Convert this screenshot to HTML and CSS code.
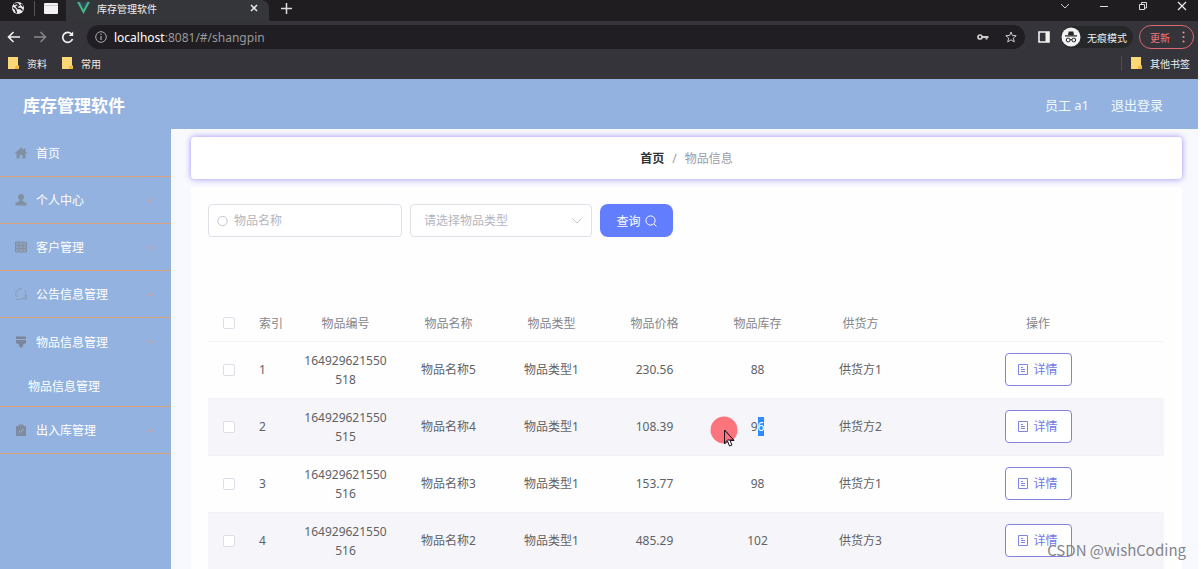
FILE: index.html
```html
<!DOCTYPE html>
<html lang="zh-CN">
<head>
<meta charset="utf-8">
<title>库存管理软件</title>
<link rel="stylesheet" href="styles.css">
</head>
<body>
<div class="screen">
  <div class="browser">
    <div class="tabstrip">
      <div class="pinned">
        <svg class="globe" width="14" height="14" viewBox="0 0 14 14"><circle cx="7" cy="7" r="6" fill="#eee"/><path d="M3 3.500 6.500 2.500 8 4.500 5.500 5.500 7 7.500H9.500L11.500 9.500M2 6.500 4.500 8.500 5.500 12M10 3 12 5.500" fill="none" stroke="#222" stroke-width="1.500"/></svg>
        <span class="pin-line"></span>
        <svg width="14" height="11" viewBox="0 0 14 11"><rect width="14" height="11" rx="1" fill="#f2f2f2"/><path d="M0 2.500H14" stroke="#ccc"/></svg>
      </div>
      <div class="tab">
        <svg width="13" height="12" viewBox="0 0 13 12"><path d="M0 0H2.700L6.500 7.500 10.300 0H13L6.500 12Z" fill="#41b883"/><path d="M2.700 0H4.900L6.500 3.200 8.100 0H10.300L6.500 7.500Z" fill="#35495e"/></svg>
        <span class="tab-title">库存管理软件</span>
        <button class="bare" aria-label="关闭标签页"><svg width="8" height="8" viewBox="0 0 8 8"><path d="M1 1 7 7M7 1 1 7" stroke="#eee" stroke-width="1.500"/></svg></button>
      </div>
      <button class="bare new-tab" aria-label="新建标签页"><svg width="11" height="11" viewBox="0 0 11 11"><path d="M5.500 0V11M0 5.500H11" stroke="#ddd" stroke-width="1.500"/></svg></button>
      <div class="window-buttons">
        <button class="bare" aria-label="搜索标签页"><svg width="10" height="10" viewBox="0 0 10 10"><path d="M1 3 5 7 9 3" fill="none" stroke="#ccc"/></svg></button>
        <button class="bare" aria-label="最小化"><svg width="10" height="10" viewBox="0 0 10 10"><path d="M1 5.500H9" stroke="#ddd"/></svg></button>
        <button class="bare" aria-label="还原"><svg width="10" height="10" viewBox="0 0 10 10"><path d="M1.500 3.500H6.500V8.500H1.500ZM3.500 3V1.500H8.500V7H7" fill="none" stroke="#ddd"/></svg></button>
        <button class="bare" aria-label="关闭"><svg width="10" height="10" viewBox="0 0 10 10"><path d="M1 1 9 9M9 1 1 9" stroke="#eee" stroke-width="1.200"/></svg></button>
      </div>
    </div>
    <div class="toolbar">
      <div class="nav-buttons">
        <button class="bare" aria-label="后退"><svg width="13" height="12" viewBox="0 0 13 12"><path d="M13 6H1.500M6.500 1 1.500 6 6.500 11" fill="none" stroke="#f2f2f2" stroke-width="1.600"/></svg></button>
        <button class="bare" aria-label="前进"><svg width="13" height="12" viewBox="0 0 13 12"><path d="M0 6H11.500M6.500 1 11.500 6 6.500 11" fill="none" stroke="#8a8a8a" stroke-width="1.400"/></svg></button>
        <button class="bare" aria-label="重新加载"><svg width="13" height="13" viewBox="0 0 13 13"><path d="M11.500 8A5 5 0 1 1 10.500 3" fill="none" stroke="#f2f2f2" stroke-width="1.700"/><path d="M12.200.5V5H7.700Z" fill="#f2f2f2"/></svg></button>
      </div>
      <div class="address">
        <svg width="12" height="12" viewBox="0 0 12 12"><circle cx="6" cy="6" r="5.300" fill="none" stroke="#aaa"/><path d="M6 5V9M6 2.800V4" stroke="#aaa" stroke-width="1.200"/></svg>
        <span class="url"><b>localhost</b>:8081/#/shangpin</span>
        <svg width="12" height="8" viewBox="0 0 12 8"><circle cx="3" cy="4" r="2" fill="none" stroke="#ccc" stroke-width="1.700"/><path d="M5 4H11.500M9.500 4V6.500" stroke="#ccc" stroke-width="1.800"/></svg>
        <svg width="12" height="12" viewBox="0 0 12 12"><path d="M6 1 7.400 4.500 11.200 4.700 8.300 7.100 9.300 10.900 6 8.800 2.700 10.900 3.700 7.100.8 4.700 4.600 4.500Z" fill="none" stroke="#ccc"/></svg>
      </div>
      <svg class="side-panel" width="12" height="12" viewBox="0 0 12 12"><path d="M1 1H11V11H1Z" fill="none" stroke="#f2f2f2" stroke-width="1.600"/><path d="M7.500 1H11V11H7.500Z" fill="#f2f2f2"/></svg>
      <div class="incognito">
        <svg width="20" height="20" viewBox="0 0 20 20"><circle cx="10" cy="10" r="9.500" fill="#f2f2f2"/><path d="M7 8 7.700 4.500H12.300L13 8ZM4 8.300H16V9.500H4Z" fill="#252525"/><circle cx="7.200" cy="13" r="1.900" fill="none" stroke="#252525"/><circle cx="12.800" cy="13" r="1.900" fill="none" stroke="#252525"/><path d="M9 12.700H11" stroke="#252525"/></svg>
        <span>无痕模式</span>
      </div>
      <button class="update">更新<svg width="3" height="12" viewBox="0 0 3 12"><circle cx="1.500" cy="1.500" r="1.100" fill="#f28b82"/><circle cx="1.500" cy="6" r="1.100" fill="#f28b82"/><circle cx="1.500" cy="10.500" r="1.100" fill="#f28b82"/></svg></button>
    </div>
    <div class="bookmarks">
      <a class="bookmark" href="#"><svg width="11" height="12" viewBox="0 0 11 12"><path d="M0 0H10V8L11 9V12H0Z" fill="#fbd775"/><path d="M7 12V10L8.500 8.500 11 10V12Z" fill="#efb73e"/></svg>资料</a>
      <a class="bookmark" href="#"><svg width="11" height="12" viewBox="0 0 11 12"><path d="M0 0H10V8L11 9V12H0Z" fill="#fbd775"/><path d="M7 12V10L8.500 8.500 11 10V12Z" fill="#efb73e"/></svg>常用</a>
      <a class="bookmark other" href="#"><svg width="11" height="12" viewBox="0 0 11 12"><path d="M0 0H10V8L11 9V12H0Z" fill="#fbd775"/><path d="M7 12V10L8.500 8.500 11 10V12Z" fill="#efb73e"/></svg>其他书签</a>
    </div>
  </div>

  <header class="header">
    <h1 class="brand">库存管理软件</h1>
    <span>员工 a1</span>
    <a class="logout" href="#">退出登录</a>
  </header>

  <div class="body">
    <nav class="sidebar">
      <a class="menu-item" href="#"><svg width="14" height="14" viewBox="0 0 14 14"><path d="M7 1.500 0.500 7.500H2.500V12.500H5.700V9H8.300V12.500H11.500V7.500H13.500L11.500 5.500V2.500H9.800V4Z" fill="#8190a2"/></svg><span>首页</span></a>
      <a class="menu-item" href="#"><svg width="14" height="14" viewBox="0 0 14 14"><circle cx="7" cy="4" r="3" fill="#8190a2"/><path d="M5.500 6H8.500V8L12.500 10V12.500H1.500V10L5.500 8Z" fill="#8190a2"/></svg><span>个人中心</span><svg class="arrow" width="8" height="5" viewBox="0 0 8 5"><path d="M1 1 4 4 7 1"/></svg></a>
      <a class="menu-item" href="#"><svg width="14" height="14" viewBox="0 0 14 14"><path d="M1.500 2H12.500V12H1.500ZM1.500 5.500H12.500M1.500 8.500H12.500M5 2V12M9 2V12" fill="#8fa1be" stroke="#8190a2"/></svg><span>客户管理</span><svg class="arrow" width="8" height="5" viewBox="0 0 8 5"><path d="M1 1 4 4 7 1"/></svg></a>
      <a class="menu-item" href="#"><svg width="14" height="14" viewBox="0 0 14 14"><path d="M2.500 10A5.500 5.500 0 0 1 8 1.700M11 3.500A5.500 5.500 0 0 1 5 12M2 12.500H5M9.500 12H12.500V8" fill="none" stroke="#879cb4"/></svg><span>公告信息管理</span><svg class="arrow" width="8" height="5" viewBox="0 0 8 5"><path d="M1 1 4 4 7 1"/></svg></a>
      <div class="menu-group">
        <a class="menu-item" href="#"><svg width="14" height="14" viewBox="0 0 14 14"><path d="M2 1.500H12V4H2ZM2 5H12V8L9 9.500V11L7 13 5 11V9.500L2 8Z" fill="#7d859b"/></svg><span>物品信息管理</span><svg class="arrow" width="8" height="5" viewBox="0 0 8 5"><path d="M1 4 4 1 7 4"/></svg></a>
        <a class="sub-item" href="#">物品信息管理</a>
      </div>
      <a class="menu-item" href="#"><svg width="14" height="14" viewBox="0 0 14 14"><path d="M2 3H4.500V1.500H9.500V3H12V13H2Z" fill="#7f8ba0"/><path d="M5 8 6.500 9.500 9.500 6" fill="none" stroke="#a2b5cf"/></svg><span>出入库管理</span><svg class="arrow" width="8" height="5" viewBox="0 0 8 5"><path d="M1 1 4 4 7 1"/></svg></a>
    </nav>

    <main class="main">
      <div class="breadcrumb"><a class="home" href="#">首页</a><span>/</span><span>物品信息</span></div>
      <section class="panel">
        <form class="filters">
          <label class="field"><svg width="12" height="12" viewBox="0 0 12 12"><circle cx="5.500" cy="6" r="4.700" fill="none" stroke="#c4c6cf"/></svg><input class="control" type="text" placeholder="物品名称" aria-label="物品名称"></label>
          <label class="field type"><select class="control" aria-label="物品类型"><option>请选择物品类型</option></select><svg width="10" height="6" viewBox="0 0 10 6"><path d="M.5.5 5 5 9.500.5" fill="none" stroke="#c4c6cf"/></svg></label>
          <button class="search" type="button">查询<svg width="12" height="12" viewBox="0 0 12 12"><circle cx="5.500" cy="5.500" r="4.600" fill="none" stroke="#fff"/><path d="M9 9 11.500 11.500" stroke="#fff"/></svg></button>
        </form>
        <table class="goods">
          <colgroup><col class="c-check"><col class="c-index"><col class="c-data"><col class="c-data"><col class="c-data"><col class="c-data"><col class="c-data"><col class="c-data"><col></colgroup>
          <thead><tr><th><input type="checkbox" class="check" aria-label="全选"></th><th class="index">索引</th><th>物品编号</th><th>物品名称</th><th>物品类型</th><th>物品价格</th><th>物品库存</th><th>供货方</th><th>操作</th></tr></thead>
          <tbody>
            <tr><td><input type="checkbox" class="check" aria-label="选择第1行"></td><td class="index">1</td><td class="code">164929621550518</td><td>物品名称5</td><td>物品类型1</td><td>230.56</td><td>88</td><td>供货方1</td><td><button class="detail"><svg width="10" height="11" viewBox="0 0 10 11"><path d="M.5.5H9.500V10.500H.5ZM3 3.500H5M3 5.500H7M3 7.500H7" fill="none" stroke="#7f84e8"/></svg>详情</button></td></tr>
            <tr><td><input type="checkbox" class="check" aria-label="选择第2行"></td><td class="index">2</td><td class="code">164929621550515</td><td>物品名称4</td><td>物品类型1</td><td>108.39</td><td class="stock">9<span class="selected">6</span><svg class="pointer" width="28" height="32" viewBox="0 0 28 32"><circle cx="14" cy="14" r="13.500" fill="#fc747c"/><path d="M14.500 14V28L17.500 25 19.500 30 22 29 20 24.500H24Z" fill="#fff" stroke="#1d1320"/><path d="M14.500 14V27L17.500 24H23.500Z" fill="#fc747c" stroke="#1d1320"/></svg></td><td>供货方2</td><td><button class="detail"><svg width="10" height="11" viewBox="0 0 10 11"><path d="M.5.5H9.500V10.500H.5ZM3 3.500H5M3 5.500H7M3 7.500H7" fill="none" stroke="#7f84e8"/></svg>详情</button></td></tr>
            <tr><td><input type="checkbox" class="check" aria-label="选择第3行"></td><td class="index">3</td><td class="code">164929621550516</td><td>物品名称3</td><td>物品类型1</td><td>153.77</td><td>98</td><td>供货方1</td><td><button class="detail"><svg width="10" height="11" viewBox="0 0 10 11"><path d="M.5.5H9.500V10.500H.5ZM3 3.500H5M3 5.500H7M3 7.500H7" fill="none" stroke="#7f84e8"/></svg>详情</button></td></tr>
            <tr><td><input type="checkbox" class="check" aria-label="选择第4行"></td><td class="index">4</td><td class="code">164929621550516</td><td>物品名称2</td><td>物品类型1</td><td>485.29</td><td>102</td><td>供货方3</td><td><button class="detail"><svg width="10" height="11" viewBox="0 0 10 11"><path d="M.5.5H9.500V10.500H.5ZM3 3.500H5M3 5.500H7M3 7.500H7" fill="none" stroke="#7f84e8"/></svg>详情</button></td></tr>
          </tbody>
        </table>
      </section>
    </main>
  </div>
  <div class="watermark">CSDN @wishCoding</div>
</div>
</body>
</html>
```

FILE: styles.css
```css
* { box-sizing: border-box; }
body {
  margin: 0;
  padding-right: 3px;
  background: #fff;
  font-family: "Noto Sans", "Noto Sans CJK SC", sans-serif;
  font-size: 12px;
  color: #606266;
}
a { color: inherit; text-decoration: none; }
svg { display: block; flex: none; }
button, input, select { font: inherit; }
.bare { display: flex; padding: 0; border: 0; background: none; }
.screen { position: relative; display: flex; flex-direction: column; height: 100vh; overflow: hidden; }

.browser { background: #35343a; color: #eee; font-size: 10px; }
.tabstrip { display: flex; height: 21px; background: #1f1d20; }
.pinned { display: flex; align-items: center; gap: 9px; padding: 0 8px 5px 11px; }
.pin-line { width: 1px; height: 15px; background: #555; }
.tab {
  display: flex; align-items: center; gap: 7px; width: 203px;
  padding: 0 11px 5px 11px; background: #35363a; border-radius: 0 8px 0 0;
}
.tab-title { flex: 1; }
.new-tab { align-items: center; padding: 0 0 5px 12px; }
.window-buttons { display: flex; align-items: center; gap: 29px; margin-left: auto; padding: 0 11px 9px 0; }
.toolbar { display: flex; align-items: center; height: 32px; padding-right: 4px; }
.nav-buttons { display: flex; align-items: center; gap: 14px; padding: 0 13px 0 7px; }
.address {
  display: flex; flex: 1; align-items: center; gap: 16px; height: 24px;
  padding: 0 8px; border-radius: 12px; background: #201e22;
}
.url { flex: 1; margin-left: -9px; font-size: 12px; color: #999; }
.url b { font-weight: 400; color: #fff; }
.side-panel { margin: 0 11px 0 13px; }
.incognito { display: flex; align-items: center; gap: 6px; height: 22px; padding-right: 6px; border-radius: 11px; background: #252728; }
.update {
  display: flex; align-items: center; gap: 12px; height: 24px; margin-left: 6px;
  padding: 0 8px 0 10px; border: 1px solid #d9686c; border-radius: 12px; background: none; color: #f2787a;
}
.bookmarks { display: flex; align-items: center; gap: 15px; height: 26px; padding: 0 8px 6px; }
.bookmark { display: flex; align-items: center; gap: 8px; }
.bookmark.other { margin-left: auto; padding-left: 9px; border-left: 1px solid #514c52; }

.header {
  display: flex; align-items: center; gap: 22px; flex: none; height: 50px;
  padding: 0 35px 0 23px; background: #93b2df; color: #f0faff; font-size: 13px;
}
.brand { flex: 1; margin: 0; font-size: 17px; font-weight: 700; color: #fff; }
.body { display: flex; flex: 1; min-height: 0; }
.sidebar { width: 171px; flex: none; padding-top: 1px; background: #93b2df; color: #fff; }
.menu-item { display: flex; align-items: center; gap: 8px; height: 47px; padding: 0 17px 0 14px; border-bottom: 1px solid #dba27c; }
.arrow { margin-left: auto; fill: none; stroke: #dc9a8c; }
.menu-group { border-bottom: 1px solid #dba27c; }
.menu-group .menu-item { border-bottom: 0; }
.sub-item { display: flex; align-items: center; height: 41px; padding-left: 28px; }

.main { flex: 1; min-width: 0; padding: 8px 16px 0 20px; background: #f8f9fe; }
.breadcrumb {
  display: flex; align-items: center; justify-content: center; gap: 8px; height: 42px;
  border-radius: 4px; background: #fff; box-shadow: 0 0 6px #9a8cf5; color: #999ba8;
}
.home { font-weight: 700; color: #303133; }
.panel { height: 100%; margin-top: 8px; padding: 17px 18px 0 17px; background: #fefeff; }
.filters { display: flex; gap: 8px; }
.field {
  display: flex; align-items: center; gap: 5px; width: 194px; height: 33px; padding: 0 9px 0 8px;
  border: 1px solid #dfe0e8; border-radius: 4px; background: #fff;
}
.field.type { width: 182px; padding-left: 13px; }
.control { flex: 1; min-width: 0; padding: 0; border: 0; outline: 0; appearance: none; background: none; color: #b4b5bf; }
.control::placeholder { color: #b4b5bf; }
.search {
  display: flex; align-items: center; justify-content: center; gap: 4px; width: 73px; height: 33px;
  border: 0; border-radius: 8px; background: #637dff; color: #fff;
}
.goods { width: 100%; margin-top: 68px; table-layout: fixed; border-collapse: collapse; text-align: center; }
.c-check { width: 41px; }
.c-index { width: 45px; }
.c-data { width: 103px; }
.goods th { height: 36px; padding: 0; border-bottom: 1px solid #f3f3f8; font-weight: 400; color: #85868c; }
.goods td { height: 57px; padding: 0 10px; border-bottom: 1px solid #f2f2f7; line-height: 19px; }
.goods td:first-child { padding: 0; }
.goods .index { padding: 0 0 0 10px; text-align: left; }
.goods tbody tr:nth-child(even) { background: #f6f6fa; }
.code { overflow-wrap: anywhere; }
.check { display: block; width: 12px; height: 12px; margin: 0 auto; appearance: none; border: 1px solid #dddfe8; border-radius: 2px; background: #fff; }
.detail {
  display: flex; align-items: center; justify-content: center; gap: 5px; width: 67px; height: 33px;
  margin: 0 auto; border: 1px solid #8581dc; border-radius: 4px; background: #fff; color: #6f77e8;
}
.stock { position: relative; }
.selected { display: inline-block; background: #2f8bff; color: #fff; }
.pointer { position: absolute; left: 4px; top: 17px; }
.watermark { position: absolute; right: 12px; bottom: 8px; font-family: "Noto Sans CJK SC", sans-serif; font-size: 15px; line-height: 22px; color: #84848a; }
```
